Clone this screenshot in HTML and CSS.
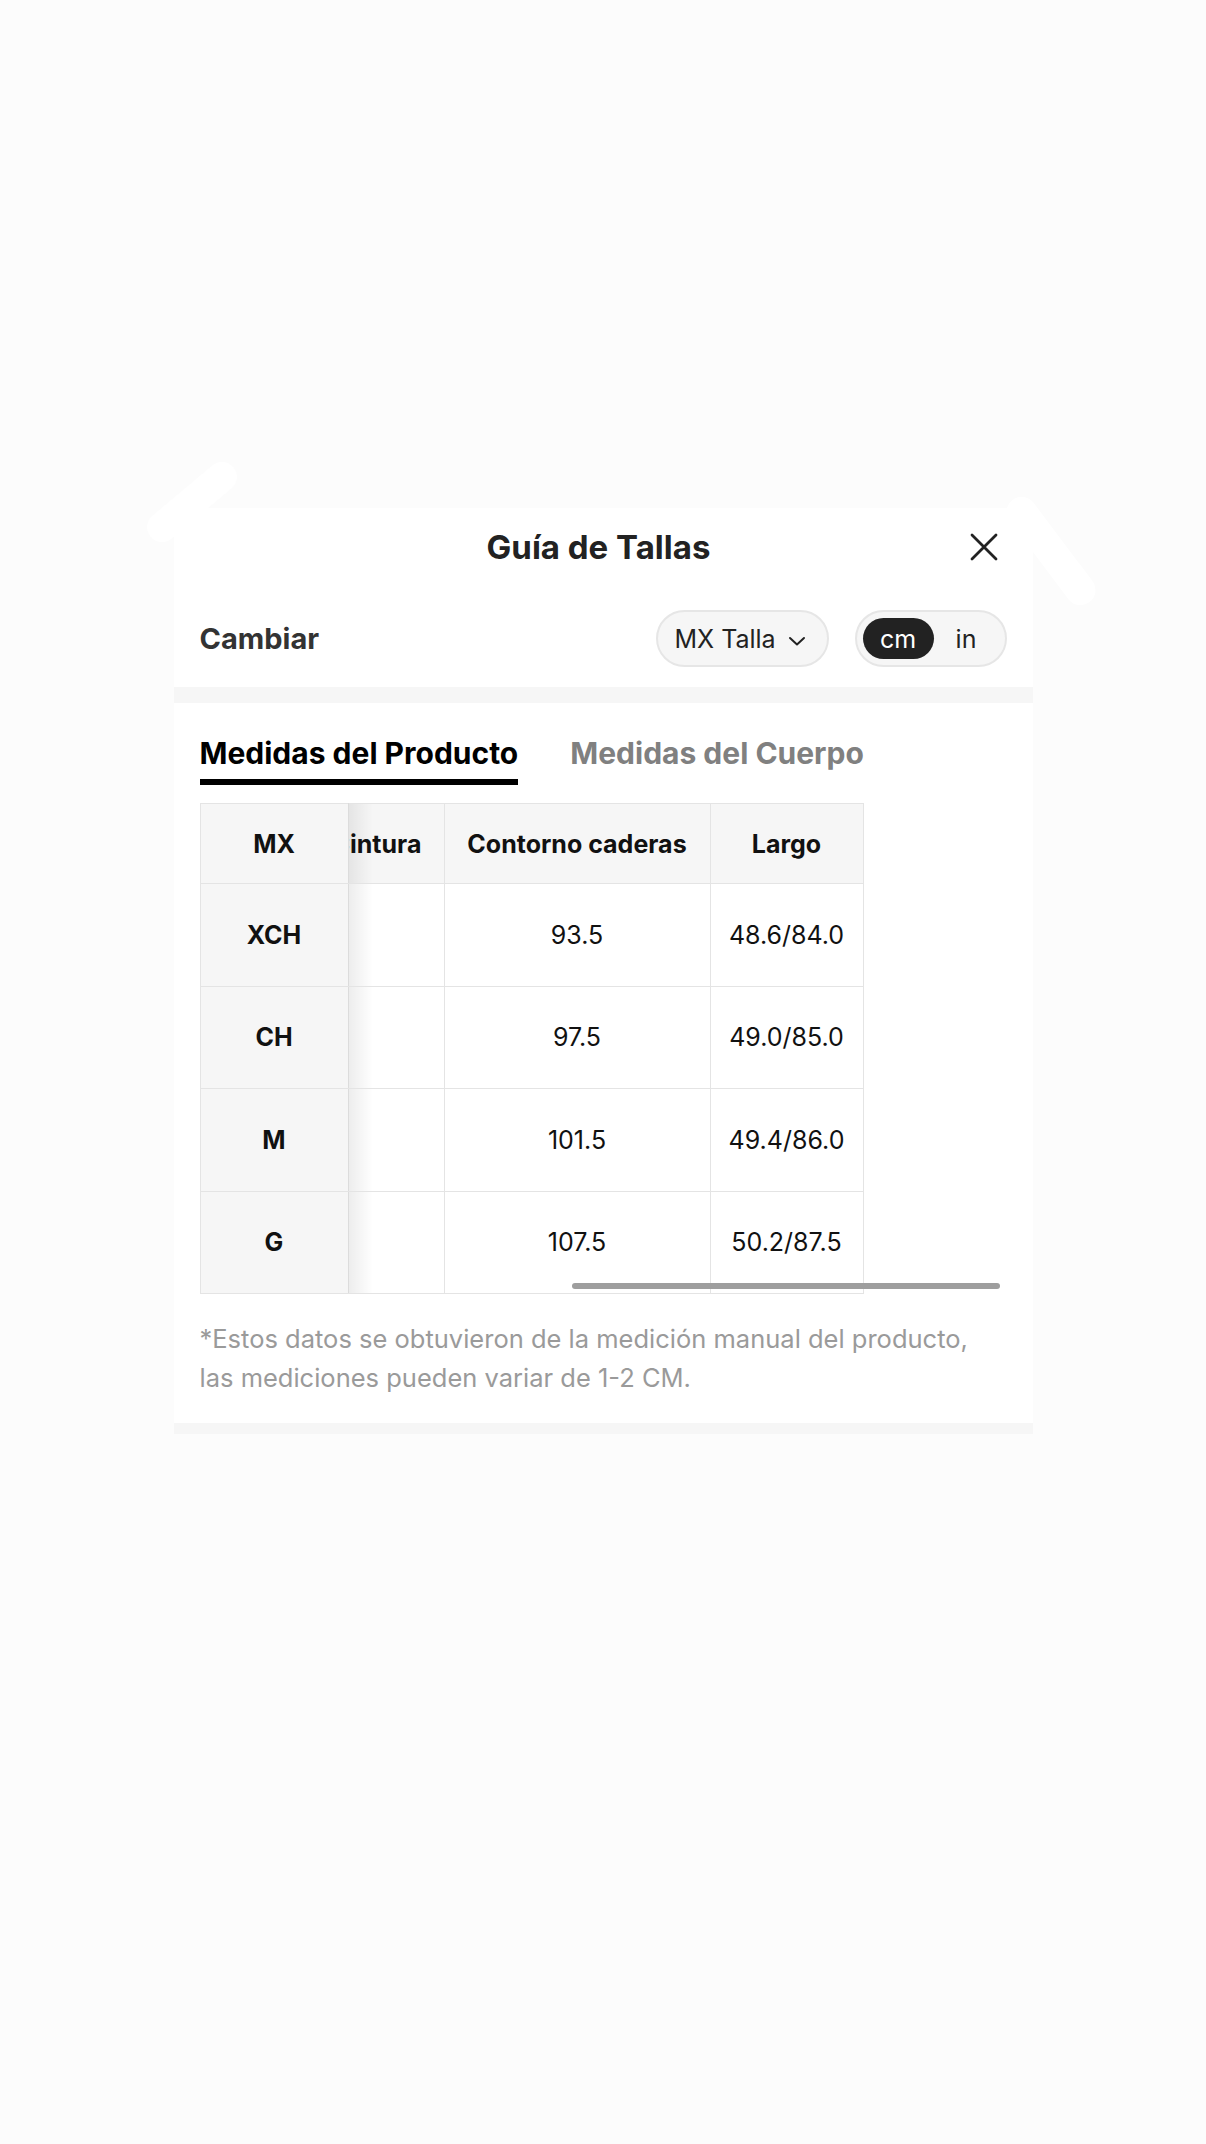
FILE: index.html
```html
<!DOCTYPE html>
<html lang="es">
<head>
<meta charset="utf-8">
<title>Guía de Tallas</title>
<link rel="stylesheet" href="styles.css">
</head>
<body>
<div class="ghost ghost-left"></div>
<div class="ghost ghost-right"></div>
<main class="sheet">
  <header class="sheet-head">
    <span></span>
    <h1 class="title">Guía de Tallas</h1>
    <button class="close" aria-label="Cerrar">
      <svg viewBox="0 0 28 28" width="28" height="28"><path d="M2 2 L26 26 M26 2 L2 26" stroke="#222" stroke-width="2.8" stroke-linecap="round" fill="none"/></svg>
    </button>
  </header>
  <div class="controls">
    <span class="label">Cambiar</span>
    <div class="ctrl-group">
      <button class="select">MX Talla
        <svg class="chev" viewBox="0 0 18 10" width="18" height="10"><path d="M2 2 L9 8.5 L16 2" stroke="#222" stroke-width="2" fill="none" stroke-linecap="round" stroke-linejoin="round"/></svg>
      </button>
      <div class="unit-toggle">
        <span class="unit active">cm</span>
        <span class="unit">in</span>
      </div>
    </div>
  </div>
  <div class="band"></div>
  <section class="content">
    <nav class="tabs">
      <span class="tab active">Medidas del Producto</span>
      <span class="tab">Medidas del Cuerpo</span>
    </nav>
    <div class="table-wrap">
      <table class="size-table">
        <colgroup>
          <col class="c1"><col class="c2"><col class="c3"><col class="c4">
        </colgroup>
        <thead>
          <tr><th class="size">MX</th><th class="clip"><span class="clip-box"><span class="clip-text">Cintura</span></span></th><th>Contorno caderas</th><th>Largo</th></tr>
        </thead>
        <tbody>
          <tr><td class="size">XCH</td><td class="clip"></td><td>93.5</td><td>48.6/84.0</td></tr>
          <tr><td class="size">CH</td><td class="clip"></td><td>97.5</td><td>49.0/85.0</td></tr>
          <tr><td class="size">M</td><td class="clip"></td><td>101.5</td><td>49.4/86.0</td></tr>
          <tr><td class="size">G</td><td class="clip"></td><td>107.5</td><td>50.2/87.5</td></tr>
        </tbody>
      </table>
      <div class="scroll-thumb"></div>
    </div>
    <p class="note">*Estos datos se obtuvieron de la medición manual del producto,<br>las mediciones pueden variar de 1-2 CM.</p>
  </section>
  <div class="band band-bottom"></div>
</main>
</body>
</html>
```
FILE: styles.css
```css
* { box-sizing: border-box; }
html, body { margin: 0; padding: 0; }
body {
  background: #fcfcfc;
  font-family: Inter, Roboto, "Liberation Sans", sans-serif;
  color: #222;
  min-height: 2144px;
  position: relative;
  padding-top: 508px;
}
.ghost {
  position: absolute;
  background: #ffffff;
  border-radius: 16px;
  height: 30px;
}
.ghost-left {
  left: 138px; top: 487px; width: 108px;
  transform: rotate(-40deg);
}
.ghost-right {
  left: 987px; top: 536px; width: 128px;
  transform: rotate(53deg);
}
.sheet {
  position: relative;
  width: 859px;
  margin: 0 auto;
  background: #fff;
}
.sheet-head {
  display: grid;
  grid-template-columns: 1fr auto 1fr;
  align-items: center;
  height: 78px;
  padding: 0 35px 0 26px;
}
.title {
  margin: 0;
  font-size: 33px;
  font-weight: 700;
  color: #222;
}
.close {
  justify-self: end;
  border: 0;
  background: none;
  padding: 0;
  width: 28px;
  height: 28px;
  display: flex;
}
.controls {
  display: flex;
  align-items: center;
  justify-content: space-between;
  padding: 24px 26px 20px 26px;
}
.label {
  font-size: 29px;
  font-weight: 700;
  color: #333;
}
.ctrl-group {
  display: flex;
  align-items: center;
  gap: 26px;
}
.select {
  height: 57px;
  width: 173px;
  border: 2px solid #e6e6e6;
  background: #f6f6f6;
  border-radius: 29px;
  font-family: Inter, Roboto, "Liberation Sans", sans-serif;
  font-size: 25px;
  color: #222;
  display: flex;
  align-items: center;
  justify-content: flex-start;
  gap: 12px;
  padding: 0 10px 0 17px;
  white-space: nowrap;
}
.chev { margin-top: 4px; flex: none; }
.unit-toggle {
  height: 57px;
  width: 152px;
  border: 2px solid #e6e6e6;
  background: #f6f6f6;
  border-radius: 29px;
  display: flex;
  align-items: center;
  padding: 0 6px;
}
.unit {
  font-size: 25px;
  color: #222;
  height: 41px;
  display: flex;
  align-items: center;
  justify-content: center;
}
.unit.active {
  width: 71px;
  background: #222;
  color: #fff;
  border-radius: 21px;
}
.unit:not(.active) { flex: 1; }
.band {
  height: 16px;
  background: #f6f6f6;
}
.band-bottom { height: 11px; }
.content {
  padding: 32px 26px 26px 26px;
}
.tabs {
  display: flex;
  gap: 52px;
  margin-bottom: 18px;
}
.tab {
  font-size: 30px;
  font-weight: 700;
  color: #808080;
  line-height: 36px;
  padding-bottom: 8px;
  border-bottom: 6px solid transparent;
}
.tab.active {
  color: #000;
  border-bottom-color: #000;
}
.table-wrap {
  position: relative;
}
.size-table {
  border-collapse: collapse;
  table-layout: fixed;
  width: 663px;
  font-size: 25px;
  color: #111;
}
.c1 { width: 148px; }
.c2 { width: 96px; }
.c3 { width: 266px; }
.c4 { width: 153px; }
.size-table th, .size-table td {
  border: 1.5px solid #e4e4e4;
  text-align: center;
  padding: 0;
  white-space: nowrap;
}
.size-table th {
  height: 80px;
  background: #f6f6f6;
  font-weight: 700;
  color: #111;
}
.size-table td { height: 102.5px; }
.size-table .size {
  background: #f6f6f6;
  font-weight: 700;
  border-right-color: #dcdcdc;
}
.size-table .clip {
  background-image: linear-gradient(to right, rgba(0,0,0,0.07), rgba(0,0,0,0));
  background-size: 24px 100%;
  background-repeat: no-repeat;
}
.size-table th.clip {
  background-color: #f6f6f6;
  text-align: left;
}
.clip-box {
  display: block;
  overflow: hidden;
}
.clip-text {
  display: inline-block;
  margin-left: -17px;
}
.scroll-thumb {
  position: absolute;
  left: 372px;
  bottom: 5px;
  width: 428px;
  height: 6px;
  border-radius: 3px;
  background: #9e9e9e;
}
.note {
  margin: 25px 0 0 0;
  font-size: 25.5px;
  line-height: 39px;
  color: #9a9a9a;
}
```
